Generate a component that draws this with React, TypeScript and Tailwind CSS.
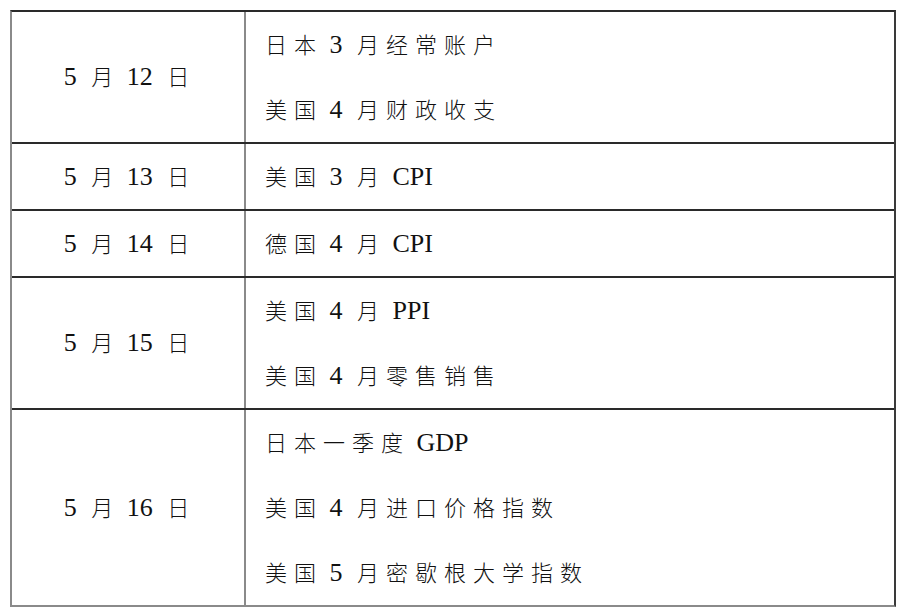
const rows = [
  { date: "5 月 12 日", items: ["日本 3 月经常账户", "美国 4 月财政收支"] },
  { date: "5 月 13 日", items: ["美国 3 月 CPI"] },
  { date: "5 月 14 日", items: ["德国 4 月 CPI"] },
  { date: "5 月 15 日", items: ["美国 4 月 PPI", "美国 4 月零售销售"] },
  { date: "5 月 16 日", items: ["日本一季度 GDP", "美国 4 月进口价格指数", "美国 5 月密歇根大学指数"] },
];

// CJK runs: smaller glyphs, wide tracking; Latin runs: larger, tight
function Spaced({ text }: { text: string }) {
  const parts = text.match(/[\u4e00-\u9fff]+|[^\u4e00-\u9fff]+/g) ?? [];
  return (
    <>
      {parts.map((p, i) =>
        /[\u4e00-\u9fff]/.test(p) ? (
          <span key={i} className="text-[22px] tracking-[7px] font-light">{p}</span>
        ) : (
          <span key={i} className="mr-[8px] text-[26px] tracking-normal">{p}</span>
        )
      )}
    </>
  );
}

export default function App() {
  return (
    <div className="h-[611px] w-[907px] bg-white pl-[10px] pt-[10px] text-[#111]">
      <div className="w-[886px] border-t-2 border-t-[#2a2a2a] border-b-2 border-b-[#8a8a8a] border-x-2 border-l-[#8a8a8a] border-r-[#3a3a3a] font-['Liberation_Serif','Noto_Sans_CJK_SC',serif]">
        {rows.map((row, i) => (
          <div
            key={row.date}
            className={`flex ${i > 0 ? "border-t-2 border-t-[#2a2a2a]" : ""}`}
          >
            <div className="flex w-[234px] items-center justify-center border-r-2 border-r-[#8a8a8a] whitespace-pre pl-[4px]">
              <span className="leading-none">
                <Spaced text={row.date} />
              </span>
            </div>
            <div className="flex-1 pl-[19px]">
              {row.items.map((item) => (
                <div key={item} className="h-[65px] overflow-hidden leading-[65px] whitespace-pre">
                  <Spaced text={item} />
                </div>
              ))}
            </div>
          </div>
        ))}
      </div>
    </div>
  );
}
